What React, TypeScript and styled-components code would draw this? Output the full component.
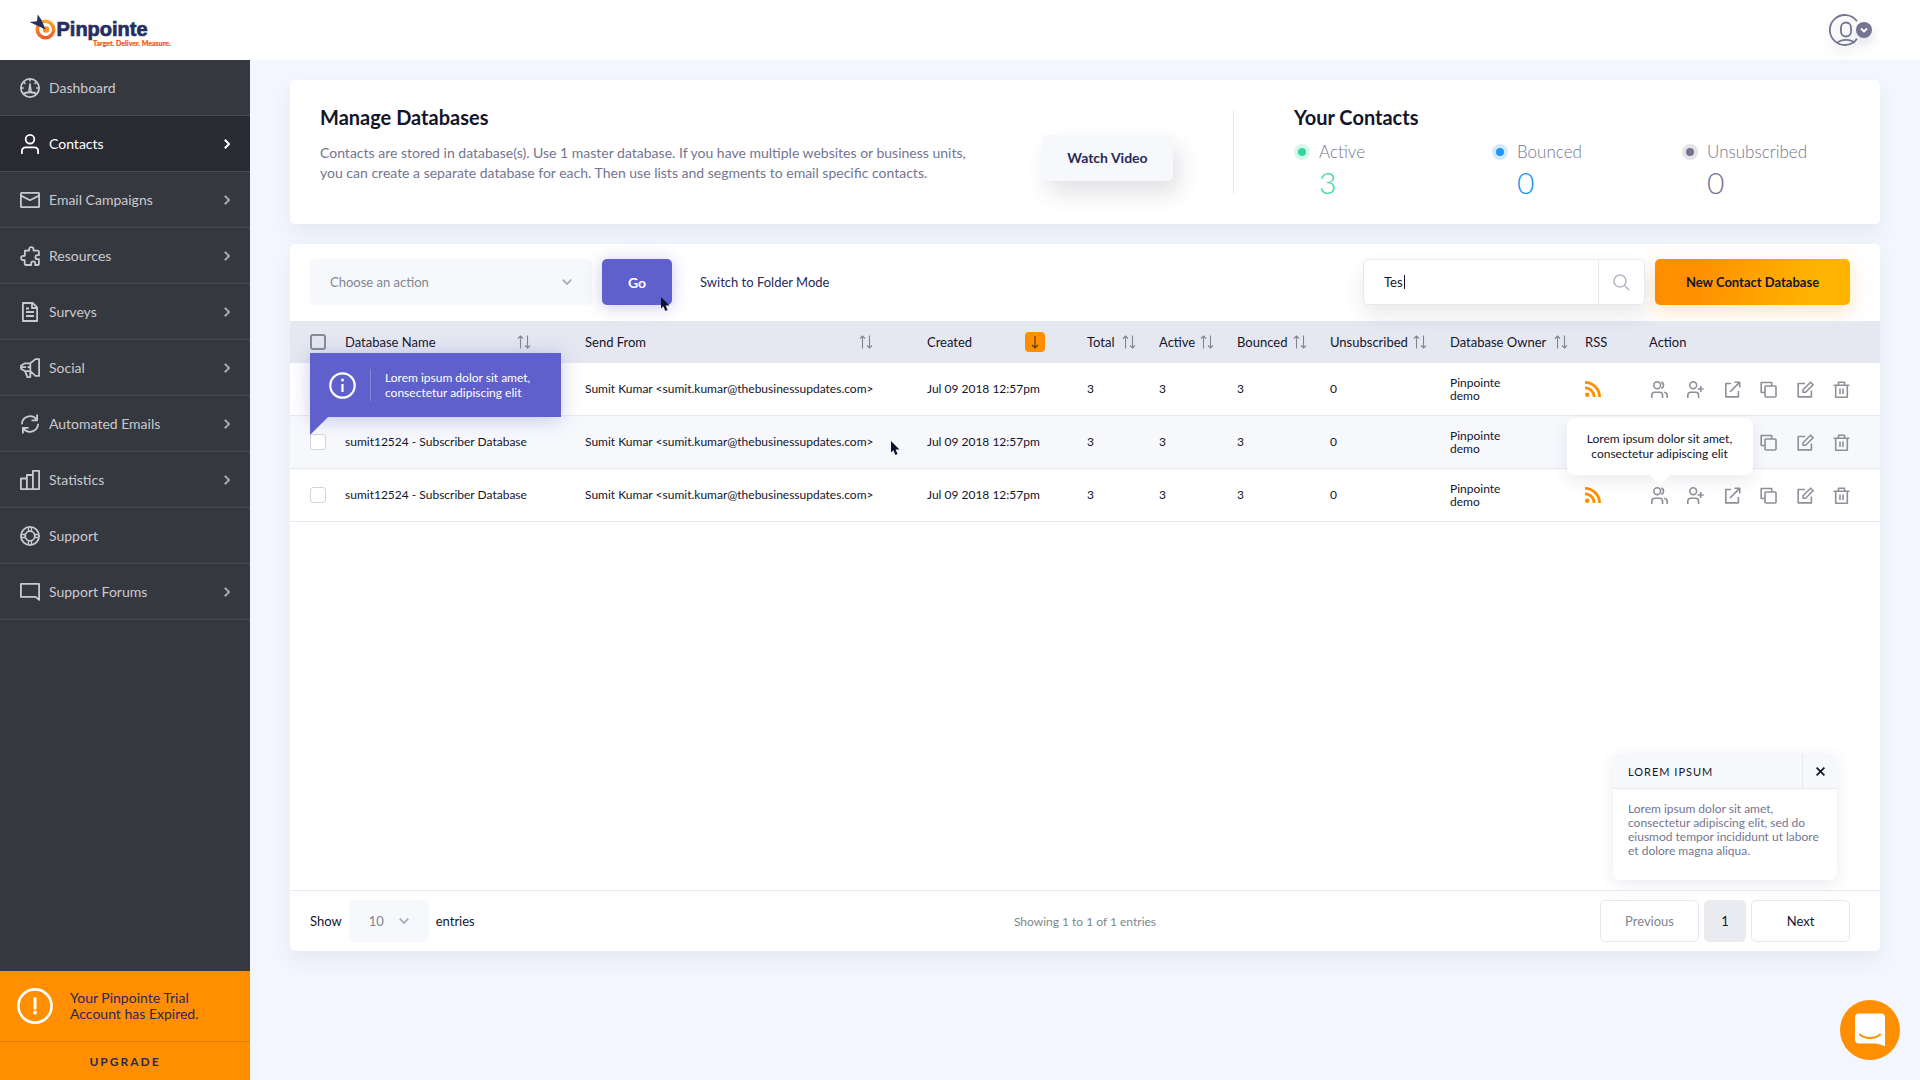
import React from 'react';
import styled, { createGlobalStyle, css } from 'styled-components';

const sans = `Lato, "Open Sans", sans-serif`;
const color = {
  page: '#f3f6fe',
  side: '#36383f',
  sideActive: '#2a2a33',
  sideLine: '#4a4d56',
  sideText: '#c9cacd',
  ink: '#14152b',
  navy: '#282a58',
  muted: '#74758f',
  grey: '#7e8690',
  pale: '#f7f8fc',
  line: '#e8e9f0',
  head: '#e5e8f1',
  icon: '#8e8f98',
  purple: '#5f60cb',
  orange: '#ff8f00',
  green: '#34d9a2',
  blue: '#2196f3',
};

const GlobalStyle = createGlobalStyle`
  *, *::before, *::after { box-sizing: border-box; }
  body { margin: 0; background: ${color.page}; font-family: ${sans}; color: ${color.ink}; }
  button, input, select { font-family: inherit; margin: 0; }
  button { cursor: pointer; }
  h2, p { margin: 0; }
`;

/* ---------- Icons ---------- */

const Svg = styled.svg`
  display: block;
  flex: none;
  fill: none;
  stroke: currentColor;
`;

const SideIcon = ({ children }: { children: React.ReactNode }) => (
  <Svg width="20" height="20" viewBox="0 0 20 20" strokeWidth="1.8" strokeLinejoin="round" aria-hidden="true">{children}</Svg>
);

const sideIcons: Record<string, React.ReactNode> = {
  dashboard: (
    <SideIcon>
      <circle cx="10" cy="10" r="9.1" />
      <path d="M3.2 16.2C6 13.6 14 13.6 16.8 16.2" />
      <path d="M10 5.8l1.2 8H8.8zM10 1v2.6M1.2 10h2.6M16.2 10h2.6M3.8 4.2l1.7 1.7M16.2 4.2l-1.7 1.7" strokeWidth="1.5" />
    </SideIcon>
  ),
  contacts: (
    <SideIcon>
      <circle cx="10" cy="5.2" r="4.3" />
      <path d="M1.9 20v-3c0-2.3 1.6-3.7 3.8-3.7h8.6c2.2 0 3.8 1.4 3.8 3.7v3" />
    </SideIcon>
  ),
  mail: (
    <SideIcon>
      <rect x=".9" y="2.9" width="18.2" height="14.2" rx=".6" />
      <path d="M1 5.6l9 4.6 9-4.6" />
    </SideIcon>
  ),
  puzzle: (
    <SideIcon>
      <path d="M4.9 4.6h4.2V3.3a2.2 2.2 0 014.4 0v1.3h4.2q1.2 0 1.2 1.2v3.4h-1.5a2 2 0 000 4h1.5V18q0 1-1.2 1h-2.5v-1.6a2 2 0 00-4 0V19H5.8Q4.7 19 4.7 18v-3.8H3.3a2.2 2.2 0 010-4.400h1.500z" />
    </SideIcon>
  ),
  surveys: (
    <SideIcon>
      <path d="M2.9 1h9.8l4.4 4.4V19H2.9z" />
      <path d="M12 1.2V6h5M6 6.500h3M6 10h8M6 14h8" />
    </SideIcon>
  ),
  social: (
    <SideIcon>
      <path d="M10.300 5.300l5.200-4.200h3.600v16.800h-3.600l-5.200-4.800zM10.300 5.300H4.800L1 7.700v3l3.800 2.400h5.500M1 9.200h5M5.100 13.100l2.300 6h2.900v-6M7.500 9.200h2.800" />
    </SideIcon>
  ),
  refresh: (
    <SideIcon>
      <path d="M1.900 10.300A8.200 8.200 0 0116.700 5.600M18.100 9.800A8.200 8.200 0 013.300 14.400M17.100.6v5.700h-5.600M2.900 19.600v-5.800h5.700" />
    </SideIcon>
  ),
  stats: (
    <SideIcon>
      <path d="M.9 19.100V8.500h6V5h6V.9h6.200v18.200zM6.900 8.500v10.600M12.900 5v14.100" />
    </SideIcon>
  ),
  support: (
    <SideIcon>
      <circle cx="10" cy="10" r="9.1" />
      <circle cx="10" cy="10" r="4.8" />
      <path d="M8.500 1v4.300M11.500 1v4.300M8.500 14.700V19M11.500 14.700V19M1 8.500h4.300M1 11.500h4.300M14.700 8.500H19M14.700 11.500H19" strokeWidth="1.3" />
    </SideIcon>
  ),
  forums: (
    <SideIcon>
      <path d="M.9 1.900h18.200v16l-3.500-3H.9z" />
    </SideIcon>
  ),
};

const ChevronRight = () => (
  <Svg width="6" height="10" viewBox="0 0 6 10" strokeWidth="2" aria-hidden="true"><path d="M.8.8L5 5 .8 9.2" /></Svg>
);
const ChevronDown = () => (
  <Svg width="10" height="6" viewBox="0 0 10 6" strokeWidth="1.8" aria-hidden="true"><path d="M.8.6L5 5 9.2.6" /></Svg>
);
const SortIcon = () => (
  <Svg width="14" height="14" viewBox="0 0 14 14" strokeWidth="1.1" aria-hidden="true">
    <path d="M3.500 13.500V1M1 3.500L3.500 1 6 3.500M10.500.5V13M8 10.500l2.500 2.500 2.500-2.500" />
  </Svg>
);
const DownIcon = () => (
  <Svg width="8" height="14" viewBox="0 0 8 14" strokeWidth="1.2" aria-hidden="true"><path d="M4 1v12M1 10l3 3 3-3" /></Svg>
);
const RssIcon = () => (
  <Svg width="16" height="16" viewBox="0 0 16 16" strokeWidth="2.8" aria-hidden="true">
    <circle cx="2.2" cy="13.8" r="2.2" fill="currentColor" stroke="none" />
    <path d="M0 6.800A9.200 9.200 0 019.200 16M0 1.400A14.600 14.600 0 0114.600 16" />
  </Svg>
);

const ActionIcon = ({ children }: { children: React.ReactNode }) => (
  <Svg width="17" height="17" viewBox="0 0 17 17" strokeWidth="1.6" strokeLinejoin="round" aria-hidden="true">{children}</Svg>
);

const actions: { label: string; icon: React.ReactNode }[] = [
  { label: 'View contacts', icon: (
    <ActionIcon>
      <circle cx="6.2" cy="4.2" r="3.4" />
      <path d="M.8 17v-2.600c0-2 1.200-3.200 3-3.200h4.800c1.800 0 3 1.200 3 3.200V17M10.300 1a3.400 3.400 0 010 6.400M13.200 11.200c2 .3 3 1.500 3 3.500V17" />
    </ActionIcon>) },
  { label: 'Add contact', icon: (
    <ActionIcon>
      <circle cx="6.2" cy="4.2" r="3.4" />
      <path d="M.8 17v-2.600c0-2 1.200-3.200 3-3.200h4.800c1.800 0 3 1.200 3 3.200V17M13.700 5v6M10.700 8h6" />
    </ActionIcon>) },
  { label: 'Open', icon: (
    <ActionIcon><path d="M7 2.500H1.800v13.400h12.600V10M10.500 1.200h5.200v5.200M15.500 1.400L6 11" /></ActionIcon>) },
  { label: 'Copy', icon: (
    <ActionIcon><rect x="5" y="5" width="11" height="11" rx="1" /><path d="M4.800 11.500H1.200V1.500h10.500v3.300" /></ActionIcon>) },
  { label: 'Edit', icon: (
    <ActionIcon><path d="M8 2.500H1.200v13.400h13.200V9.500M6 8.700L13.600 1.200l2.500 2.500-7.500 7.600H6z" /></ActionIcon>) },
  { label: 'Delete', icon: (
    <ActionIcon><path d="M.6 4.200h15.800M2.700 4.200v12h11.600v-12M5.500 4V1.200h6V4M7 7.500v5.500M10 7.500v5.500" /></ActionIcon>) },
];

const PointerSvg = styled.svg<{ $x: string; $y: string }>`
  position: absolute;
  left: ${p => p.$x};
  top: ${p => p.$y};
  z-index: 3;
  pointer-events: none;
`;
const Pointer = ({ x, y }: { x: string; y: string }) => (
  <PointerSvg $x={x} $y={y} width="9" height="14" viewBox="0 0 9 14" aria-hidden="true">
    <path d="M0 0v11.500l2.300-2.300L4.400 14l2.200-1-2-4.500H8.500z" fill="#11132b" />
  </PointerSvg>
);

/* ---------- Shell ---------- */

const Header = styled.header`
  height: 60px;
  background: #fff;
  display: flex;
  align-items: center;
  justify-content: space-between;
  padding: 0 46px 0 28px;
`;
const HomeLink = styled.a`display: block; line-height: 0;`;
const AvatarButton = styled.button`
  border: 0;
  padding: 0;
  background: none;
  color: ${color.muted};
  filter: drop-shadow(0 6px 6px rgba(80, 84, 130, 0.2));
`;
const Body = styled.div`
  display: flex;
  min-height: calc(100vh - 60px);
`;
const Sidebar = styled.aside`
  width: 250px;
  flex: none;
  background: ${color.side};
  display: flex;
  flex-direction: column;
`;
const Nav = styled.nav`flex: 1;`;
const NavLink = styled.a<{ $active?: boolean }>`
  height: 56px;
  padding: 0 20px;
  display: flex;
  align-items: center;
  gap: 9px;
  border-bottom: 1px solid ${color.sideLine};
  font-size: 14px;
  text-decoration: none;
  color: ${p => (p.$active ? '#fff' : color.sideText)};
  background: ${p => (p.$active ? color.sideActive : 'none')};
`;
const NavLabel = styled.span`flex: 1;`;
const NavArrow = styled.span`opacity: 0.75; ${NavLink}[aria-current] & { opacity: 1; }`;

const Trial = styled.section`background: ${color.orange}; color: ${color.navy};`;
const TrialNote = styled.div`
  height: 71px;
  padding: 0 17px;
  display: flex;
  align-items: center;
  gap: 17px;
  font-size: 14px;
  line-height: 16px;
  border-bottom: 1px solid #d97c0a;
`;
const TrialText = styled.p`max-width: 140px;`;
const Upgrade = styled.a`
  display: flex;
  align-items: center;
  justify-content: center;
  height: 38px;
  font-size: 12px;
  font-weight: 700;
  letter-spacing: 2px;
  color: inherit;
  text-decoration: none;
`;

const Main = styled.main`
  flex: 1;
  min-width: 0;
  padding: 20px 40px;
  display: flex;
  flex-direction: column;
  gap: 20px;
`;
const cardStyle = css`
  background: #fff;
  border-radius: 5px;
  box-shadow: 0 10px 20px rgba(62, 70, 120, 0.07);
`;

/* ---------- Summary card ---------- */

const Summary = styled.section`
  ${cardStyle}
  padding: 24px 60px 24px 30px;
  min-height: 144px;
  display: flex;
`;
const Title = styled.h2`
  font-size: 20px;
  line-height: 26px;
  font-weight: 700;
`;
const Intro = styled.div`flex: 1; display: flex; flex-direction: column; gap: 13px;`;
const IntroText = styled.p`
  max-width: 660px;
  font-size: 14px;
  line-height: 20px;
  color: ${color.muted};
`;
const WatchButton = styled.button`
  align-self: center;
  width: 131px;
  height: 46px;
  margin: 12px 60px 0 0;
  padding: 0 0 2px;
  border: 0;
  border-radius: 5px;
  background: ${color.pale};
  box-shadow: 6px 12px 22px rgba(50, 50, 70, 0.14);
  font-size: 14px;
  font-weight: 700;
  color: ${color.navy};
`;
const Stats = styled.div`
  flex: none;
  display: flex;
  flex-direction: column;
  gap: 12px;
  padding-left: 60px;
  margin: 6px 0;
  border-left: 1px solid ${color.line};
`;
const StatsTitle = styled(Title)`margin-top: -6px;`;
const StatRow = styled.div`
  display: grid;
  grid-template-columns: 198px 190px 138px;
`;
const Stat = styled.div<{ $tone: string }>`
  display: grid;
  grid-template-columns: 16px auto;
  gap: 9px;
  align-items: center;
  color: ${p => p.$tone};
`;
const Dot = styled.span`
  display: grid;
  place-items: center;
  &::before {
    content: '';
    grid-area: 1 / 1;
    width: 16px;
    height: 16px;
    border-radius: 50%;
    background: currentColor;
    opacity: 0.2;
  }
  &::after {
    content: '';
    grid-area: 1 / 1;
    width: 8px;
    height: 8px;
    border-radius: 50%;
    background: currentColor;
  }
`;
const StatLabel = styled.span`
  font-size: 17px;
  line-height: 20px;
  font-weight: 300;
  color: ${color.muted};
`;
const StatValue = styled.span`
  grid-column: 2;
  font-size: 30px;
  line-height: 22px;
  font-weight: 300;
`;

/* ---------- Database card ---------- */

const Panel = styled.section`
  ${cardStyle}
  position: relative;
  display: flex;
  flex-direction: column;
  min-height: calc(100vh - 373px);
`;
const Toolbar = styled.div`
  height: 77px;
  padding: 15px 30px 16px 20px;
  display: flex;
  align-items: center;
  gap: 10px;
`;
const SelectBox = styled.div<{ $w: string; $h: string }>`
  position: relative;
  width: ${p => p.$w};
  height: ${p => p.$h};
  color: #a9abba;
`;
const Select = styled.select`
  appearance: none;
  width: 100%;
  height: 100%;
  border: 0;
  border-radius: 5px;
  padding: 0 20px;
  background: ${color.pale};
  font-size: 13px;
  color: ${color.grey};
`;
const SelectArrow = styled.span`
  position: absolute;
  right: 20px;
  top: calc(50% - 3px);
  pointer-events: none;
`;
const GoButton = styled.button`
  position: relative;
  width: 70px;
  height: 46px;
  border: 0;
  border-radius: 5px;
  background: ${color.purple};
  box-shadow: 0 2px 16px rgba(95, 96, 203, 0.35);
  font-size: 14px;
  font-weight: 700;
  color: #fff;
`;
const ModeLink = styled.a`
  margin-left: 18px;
  font-size: 13px;
  color: ${color.navy};
  text-decoration: none;
`;
const Search = styled.form`
  position: relative;
  margin-left: auto;
  width: 282px;
  height: 46px;
  display: flex;
  border: 1px solid ${color.line};
  border-radius: 5px;
  background: #fff;
  box-shadow: 0 10px 20px rgba(50, 50, 70, 0.1);
`;
const SearchInput = styled.input`
  flex: 1;
  min-width: 0;
  border: 0;
  border-right: 1px solid ${color.line};
  padding: 0 20px;
  background: none;
  font-size: 13px;
  color: ${color.ink};
`;
const Caret = styled.span`
  position: absolute;
  left: 40px;
  top: 15px;
  width: 1px;
  height: 14px;
  background: ${color.ink};
`;
const SearchButton = styled.button`
  width: 45px;
  border: 0;
  padding: 0;
  display: grid;
  place-items: center;
  background: none;
  color: #b4b6c6;
`;
const NewButton = styled.button`
  width: 195px;
  height: 46px;
  border: 0;
  border-radius: 5px;
  background: linear-gradient(100deg, #ff8f00 20%, #ffb300 80%);
  box-shadow: 0 6px 20px rgba(255, 143, 0, 0.25);
  font-size: 13px;
  font-weight: 700;
  color: ${color.ink};
`;

const Table = styled.table`
  width: 100%;
  table-layout: fixed;
  border-collapse: separate;
  border-spacing: 0;
  font-size: 12px;
  line-height: 14px;
`;
const Col = styled.col<{ $w?: string }>`width: ${p => p.$w || 'auto'};`;
const Th = styled.th`
  height: 42px;
  padding: 0;
  background: ${color.head};
  text-align: left;
  font-size: 13px;
  font-weight: 400;
  white-space: nowrap;
  &:first-child { padding-left: 20px; }
`;
const HeadCell = styled.div<{ $gap: string }>`
  display: flex;
  align-items: center;
  justify-content: space-between;
  padding-right: ${p => p.$gap};
`;
const SortButton = styled.button<{ $on?: boolean }>`
  display: grid;
  place-items: center;
  width: ${p => (p.$on ? '20px' : '14px')};
  height: 20px;
  padding: 0;
  border: 0;
  border-radius: 4px;
  background: ${p => (p.$on ? color.orange : 'none')};
  color: ${p => (p.$on ? '#5b3a10' : color.grey)};
`;
const Row = styled.tr`&:nth-child(even) { background: ${color.pale}; }`;
const Td = styled.td`
  height: 53px;
  padding: 0;
  border-bottom: 1px solid ${color.line};
  &:first-child { padding-left: 20px; }
`;
const Name = styled.span<{ $covered: boolean }>`visibility: ${p => (p.$covered ? 'hidden' : 'visible')};`;
const Owner = styled.span`display: block; max-width: 60px; line-height: 13px;`;
const Anchor = styled.span`position: relative; display: inline-block; vertical-align: middle;`;
const Check = styled.input<{ $dark?: boolean }>`
  appearance: none;
  display: block;
  margin: 0;
  width: 16px;
  height: 16px;
  border: ${p => (p.$dark ? '2px solid #858d98' : '1px solid #d3d4de')};
  border-radius: 3px;
  background: ${p => (p.$dark ? 'transparent' : '#fff')};
`;
const RssLink = styled.a`display: block; width: 16px; color: ${color.orange};`;
const Actions = styled.div`
  display: flex;
  justify-content: space-between;
  width: 201px;
  padding-left: 2px;
`;
const ActionButton = styled.button`
  display: block;
  padding: 0;
  border: 0;
  background: none;
  color: ${color.icon};
`;

const InfoTip = styled.div`
  position: absolute;
  left: 0;
  bottom: calc(100% + 17px);
  z-index: 2;
  width: 251px;
  height: 64px;
  padding: 0 19px;
  display: flex;
  align-items: center;
  gap: 14px;
  background: ${color.purple};
  box-shadow: 0 2px 18px rgba(95, 96, 203, 0.35);
  color: #fff;
  font-size: 12px;
  line-height: 15px;
  &::after {
    content: '';
    position: absolute;
    left: 0;
    top: 100%;
    border: 9px solid transparent;
    border-top-color: ${color.purple};
    border-left-color: ${color.purple};
  }
`;
const TipText = styled.p`
  padding: 1px 0 1px 14px;
  border-left: 1px solid #8586dc;
  white-space: nowrap;
`;
const PeopleTip = styled.div`
  position: absolute;
  left: 50%;
  bottom: calc(100% + 12px);
  transform: translateX(-50%);
  z-index: 2;
  width: 186px;
  padding: 13px 0 14px;
  border-radius: 8px;
  background: #fff;
  box-shadow: 0 6px 16px rgba(60, 66, 110, 0.1);
  color: ${color.ink};
  font-size: 12px;
  line-height: 15px;
  text-align: center;
  &::after {
    content: '';
    position: absolute;
    left: calc(50% - 10px);
    top: 100%;
    border: 10px solid transparent;
    border-bottom-width: 0;
    border-top-color: #fff;
  }
`;

const Footer = styled.footer`
  margin-top: auto;
  height: 61px;
  padding: 0 30px 0 20px;
  border-top: 1px solid ${color.line};
  display: grid;
  grid-template-columns: 1fr auto 1fr;
  align-items: center;
  font-size: 13px;
`;
const Entries = styled.label`display: flex; align-items: center; gap: 7px;`;
const Showing = styled.span`font-size: 12px; color: ${color.grey}; padding-left: 10px;`;
const Pager = styled.nav`display: flex; justify-content: flex-end; gap: 5px;`;
const PageButton = styled.button<{ $current?: boolean }>`
  width: ${p => (p.$current ? '42px' : '99px')};
  height: 42px;
  border: 1px solid ${p => (p.$current ? '#eaebf0' : color.line)};
  border-radius: 5px;
  background: ${p => (p.$current ? '#eaebf0' : '#fff')};
  font-size: 13px;
  color: ${color.ink};
  &:disabled { color: ${color.grey}; }
`;

const Toast = styled.section`
  position: absolute;
  right: 43px;
  bottom: 71px;
  width: 224px;
  min-height: 126px;
  border-radius: 8px;
  overflow: hidden;
  background: #fff;
  box-shadow: 0 4px 16px rgba(60, 66, 110, 0.1);
`;
const ToastHead = styled.div`
  height: 35px;
  display: flex;
  background: ${color.pale};
  border-bottom: 1px solid ${color.line};
`;
const ToastTitle = styled.h2`
  flex: 1;
  padding-left: 15px;
  font-size: 11px;
  line-height: 36px;
  font-weight: 400;
  letter-spacing: 1px;
`;
const CloseButton = styled.button`
  width: 35px;
  padding: 0;
  border: 0;
  border-left: 1px solid ${color.line};
  display: grid;
  place-items: center;
  background: none;
  color: ${color.ink};
`;
const ToastText = styled.p`
  padding: 13px 15px;
  font-size: 12px;
  line-height: 14px;
  color: ${color.muted};
`;
const Chat = styled.button`
  position: fixed;
  right: 20px;
  bottom: 20px;
  width: 60px;
  height: 60px;
  padding: 0;
  border: 0;
  border-radius: 50%;
  display: grid;
  place-items: center;
  background: ${color.orange};
`;

/* ---------- Data ---------- */

const navItems = [
  { icon: 'dashboard', label: 'Dashboard', arrow: false },
  { icon: 'contacts', label: 'Contacts', arrow: true, active: true },
  { icon: 'mail', label: 'Email Campaigns', arrow: true },
  { icon: 'puzzle', label: 'Resources', arrow: true },
  { icon: 'surveys', label: 'Surveys', arrow: true },
  { icon: 'social', label: 'Social', arrow: true },
  { icon: 'refresh', label: 'Automated Emails', arrow: true },
  { icon: 'stats', label: 'Statistics', arrow: true },
  { icon: 'support', label: 'Support', arrow: false },
  { icon: 'forums', label: 'Support Forums', arrow: true },
];

const columns = [
  { label: 'Database Name', width: '240px', gap: '54px' },
  { label: 'Send From', width: '342px', gap: '54px' },
  { label: 'Created', width: '160px', gap: '42px', on: true },
  { label: 'Total', width: '72px', gap: '23px' },
  { label: 'Active', width: '78px', gap: '23px' },
  { label: 'Bounced', width: '93px', gap: '23px' },
  { label: 'Unsubscribed', width: '120px', gap: '23px' },
  { label: 'Database Owner', width: '135px', gap: '17px' },
];

const record = {
  name: 'sumit12524 - Subscriber Database',
  from: 'Sumit Kumar <sumit.kumar@thebusinessupdates.com>',
  created: 'Jul 09 2018 12:57pm',
  total: 3,
  active: 3,
  bounced: 3,
  unsubscribed: 0,
  owner: 'Pinpointe demo',
};
const records = [
  { id: 1, ...record },
  { id: 2, ...record },
  { id: 3, ...record },
];

const Logo = () => (
  <svg width="146" height="36" viewBox="0 0 146 36" role="img" aria-label="Pinpointe">
    <defs>
      <linearGradient id="ring" x1="0" y1="0" x2="0" y2="1">
        <stop offset="0" stopColor="#f9a72b" />
        <stop offset="1" stopColor="#f15a24" />
      </linearGradient>
    </defs>
    <circle cx="17.5" cy="17.5" r="8.2" fill="none" stroke="url(#ring)" strokeWidth="3.6" />
    <circle cx="18" cy="17.5" r="3.2" fill="#f7931e" />
    <path d="M17.500 17.500L8.500 13.200 1.500 10 9 9.200 9.800 2.400 13.500 8z" fill="#262e5d" />
    <text x="28.5" y="24" fontFamily="Liberation Sans, Arial, sans-serif" fontWeight="700" fontSize="20" fill="#262e5d" stroke="#262e5d" strokeWidth=".7">Pinpointe</text>
    <text x="65" y="33.5" fontFamily="Lato, sans-serif" fontWeight="900" fontSize="7" fill="#f15a24" stroke="#f15a24" strokeWidth=".2">Target. Deliver. Measure.</text>
  </svg>
);

export default function App() {
  return (
    <>
      <GlobalStyle />
      <Header>
        <HomeLink href="#" aria-label="Pinpointe home"><Logo /></HomeLink>
        <AvatarButton aria-label="Account menu">
          <Svg width="46" height="34" viewBox="0 0 46 34" strokeWidth="1.8" aria-hidden="true">
            <path d="M29 25.800A15 15 0 1129 8.200" />
            <rect x="13" y="9.5" width="10" height="14" rx="5" />
            <path d="M9.500 30c3-4.200 14-4.200 17 0" />
            <circle cx="36" cy="17" r="8" fill="currentColor" stroke="none" />
            <path d="M33 15.500l3 3 3-3" stroke="#fff" />
          </Svg>
        </AvatarButton>
      </Header>
      <Body>
        <Sidebar>
          <Nav aria-label="Main">
            {navItems.map(n => (
              <NavLink key={n.label} href="#" $active={n.active} aria-current={n.active ? 'page' : undefined}>
                {sideIcons[n.icon]}
                <NavLabel>{n.label}</NavLabel>
                {n.arrow && <NavArrow><ChevronRight /></NavArrow>}
              </NavLink>
            ))}
          </Nav>
          <Trial>
            <TrialNote>
              <Svg width="36" height="36" viewBox="0 0 36 36" strokeWidth="2.6" strokeLinecap="round" color="#fff" aria-hidden="true">
                <circle cx="18" cy="18" r="16.6" />
                <path d="M18 10.500v9.500" strokeWidth="3" />
                <circle cx="18" cy="24.5" r="1.9" fill="currentColor" stroke="none" />
              </Svg>
              <TrialText>Your Pinpointe Trial Account has Expired.</TrialText>
            </TrialNote>
            <Upgrade href="#">UPGRADE</Upgrade>
          </Trial>
        </Sidebar>

        <Main>
          <Summary>
            <Intro>
              <Title>Manage Databases</Title>
              <IntroText>
                Contacts are stored in database(s). Use 1 master database. If you have multiple websites or business
                units, you can create a separate database for each. Then use lists and segments to email specific contacts.
              </IntroText>
            </Intro>
            <WatchButton>Watch Video</WatchButton>
            <Stats>
              <StatsTitle>Your Contacts</StatsTitle>
              <StatRow>
                <Stat $tone={color.green}><Dot /><StatLabel>Active</StatLabel><StatValue>3</StatValue></Stat>
                <Stat $tone={color.blue}><Dot /><StatLabel>Bounced</StatLabel><StatValue>0</StatValue></Stat>
                <Stat $tone={color.muted}><Dot /><StatLabel>Unsubscribed</StatLabel><StatValue>0</StatValue></Stat>
              </StatRow>
            </Stats>
          </Summary>

          <Panel>
            <Toolbar>
              <SelectBox $w="282px" $h="46px">
                <Select aria-label="Choose an action"><option>Choose an action</option></Select>
                <SelectArrow><ChevronDown /></SelectArrow>
              </SelectBox>
              <GoButton>Go<Pointer x="59px" y="38px" /></GoButton>
              <ModeLink href="#">Switch to Folder Mode</ModeLink>
              <Search onSubmit={e => e.preventDefault()}>
                <SearchInput aria-label="Search databases" defaultValue="Tes" />
                <Caret />
                <SearchButton aria-label="Search">
                  <Svg width="17" height="17" viewBox="0 0 17 17" strokeWidth="1.5" aria-hidden="true">
                    <circle cx="7" cy="7" r="6" /><path d="M11.300 11.300l5 5" />
                  </Svg>
                </SearchButton>
              </Search>
              <NewButton>New Contact Database</NewButton>
            </Toolbar>

            <Table>
              <colgroup>
                <Col $w="55px" />
                {columns.map(c => <Col key={c.label} $w={c.width} />)}
                <Col $w="64px" />
                <Col />
              </colgroup>
              <thead>
                <tr>
                  <Th><Check type="checkbox" $dark aria-label="Select all databases" /></Th>
                  {columns.map(c => (
                    <Th key={c.label}>
                      <HeadCell $gap={c.gap}>
                        {c.label}
                        <SortButton $on={c.on} aria-label={`Sort by ${c.label}`}>{c.on ? <DownIcon /> : <SortIcon />}</SortButton>
                      </HeadCell>
                    </Th>
                  ))}
                  <Th>RSS</Th>
                  <Th>Action</Th>
                </tr>
              </thead>
              <tbody>
                {records.map(r => (
                  <Row key={r.id}>
                    <Td>
                      <Anchor>
                        <Check type="checkbox" aria-label={`Select ${r.name}`} />
                        {r.id === 2 && (
                          <InfoTip role="tooltip">
                            <Svg width="27" height="27" viewBox="0 0 27 27" strokeWidth="2.2" aria-hidden="true">
                              <circle cx="13.5" cy="13.5" r="12.2" />
                              <path d="M13.500 12v8" />
                              <circle cx="13.5" cy="8" r="1.5" fill="currentColor" stroke="none" />
                            </Svg>
                            <TipText>Lorem ipsum dolor sit amet,<br />consectetur adipiscing elit</TipText>
                          </InfoTip>
                        )}
                      </Anchor>
                    </Td>
                    <Td><Name $covered={r.id === 1}>{r.name}</Name></Td>
                    <Td><Anchor>{r.from}{r.id === 2 && <Pointer x="calc(100% + 18px)" y="6px" />}</Anchor></Td>
                    <Td>{r.created}</Td>
                    <Td>{r.total}</Td>
                    <Td>{r.active}</Td>
                    <Td>{r.bounced}</Td>
                    <Td>{r.unsubscribed}</Td>
                    <Td><Owner>{r.owner}</Owner></Td>
                    <Td><RssLink href="#" aria-label="RSS feed"><RssIcon /></RssLink></Td>
                    <Td>
                      <Actions>
                        {actions.map((a, i) => (
                          <Anchor key={a.label}>
                            <ActionButton aria-label={a.label}>{a.icon}</ActionButton>
                            {r.id === 3 && i === 0 && (
                              <PeopleTip role="tooltip">Lorem ipsum dolor sit amet,<br />consectetur adipiscing elit</PeopleTip>
                            )}
                          </Anchor>
                        ))}
                      </Actions>
                    </Td>
                  </Row>
                ))}
              </tbody>
            </Table>

            <Footer>
              <Entries>
                Show
                <SelectBox $w="80px" $h="42px">
                  <Select defaultValue="10"><option>10</option><option>25</option></Select>
                  <SelectArrow><ChevronDown /></SelectArrow>
                </SelectBox>
                entries
              </Entries>
              <Showing>Showing 1 to 1 of 1 entries</Showing>
              <Pager aria-label="Pages">
                <PageButton disabled>Previous</PageButton>
                <PageButton $current aria-current="page">1</PageButton>
                <PageButton>Next</PageButton>
              </Pager>
            </Footer>

            <Toast>
              <ToastHead>
                <ToastTitle>LOREM IPSUM</ToastTitle>
                <CloseButton aria-label="Close">
                  <Svg width="9" height="9" viewBox="0 0 9 9" strokeWidth="1.7" aria-hidden="true"><path d="M.6.6l7.800 7.800M8.400.6L.6 8.400" /></Svg>
                </CloseButton>
              </ToastHead>
              <ToastText>
                Lorem ipsum dolor sit amet, consectetur adipiscing elit, sed do eiusmod tempor incididunt ut labore et
                dolore magna aliqua.
              </ToastText>
            </Toast>
          </Panel>
        </Main>
      </Body>
      <Chat aria-label="Open chat">
        <svg width="30" height="34" viewBox="0 0 30 34" aria-hidden="true">
          <path d="M4 .5h22a4 4 0 014 4V33l-8.500-2.500H4a4 4 0 01-4-4v-22a4 4 0 014-4z" fill="#fff" />
          <path d="M5 21.500c5 4.600 15 4.600 20 0" fill="none" stroke="#ff8f00" strokeWidth="2" strokeLinecap="round" />
        </svg>
      </Chat>
    </>
  );
}
